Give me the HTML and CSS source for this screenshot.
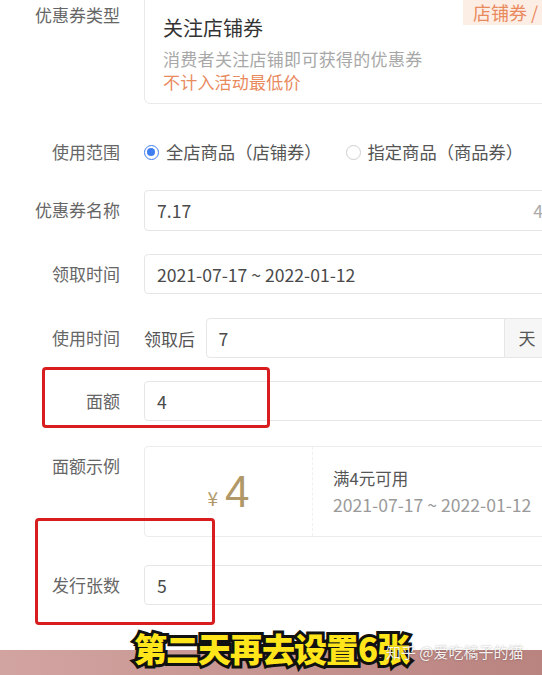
FILE: index.html
```html
<!DOCTYPE html>
<html lang="zh-CN">
<head>
<meta charset="utf-8">
<title>优惠券设置</title>
<link rel="stylesheet" href="styles.css">
</head>
<body>
<div class="page">
  <div class="form">
    <div class="row row-type">
      <div class="label label-type">优惠券类型</div>
      <div class="card">
        <div class="badge">店铺券 /</div>
        <div class="card-title">关注店铺券</div>
        <div class="card-desc">消费者关注店铺即可获得的优惠券</div>
        <div class="card-note">不计入活动最低价</div>
      </div>
    </div>

    <div class="row row-radio">
      <div class="label">使用范围</div>
      <div class="radios">
        <label class="radio"><span class="dot on"></span>全店商品（店铺券）</label>
        <label class="radio"><span class="dot"></span>指定商品（商品券）</label>
      </div>
    </div>

    <div class="row row-name">
      <div class="label">优惠券名称</div>
      <div class="input"><span>7.17</span><span class="count">4</span></div>
    </div>

    <div class="row row-get">
      <div class="label">领取时间</div>
      <div class="input"><span>2021-07-17 ~ 2022-01-12</span></div>
    </div>

    <div class="row row-use">
      <div class="label">使用时间</div>
      <div class="use">
        <span class="prefix">领取后</span>
        <div class="input input-days"><span>7</span></div>
        <div class="addon">天</div>
      </div>
    </div>

    <div class="row row-amount">
      <div class="label">面额</div>
      <div class="input"><span>4</span></div>
    </div>

    <div class="row row-preview">
      <div class="label">面额示例</div>
      <div class="preview">
        <div class="pv-left"><span class="yen">¥</span><span class="big">4</span></div>
        <div class="pv-right">
          <div class="pv-cond">满4元可用</div>
          <div class="pv-date">2021-07-17 ~ 2022-01-12</div>
        </div>
      </div>
    </div>

    <div class="row row-count">
      <div class="label">发行张数</div>
      <div class="input"><span>5</span></div>
    </div>
  </div>

  <div class="strip"></div>

  <div class="mark mark-1"></div>
  <div class="mark mark-2"></div>
  <div class="caption">第二天再去设置6张</div>
  <div class="watermark">知乎 @爱吃橘子的猫</div>
</div>
</body>
</html>
```

FILE: styles.css
```css
* { box-sizing: border-box; }
html, body { margin: 0; padding: 0; }
body {
  width: 542px;
  height: 675px;
  overflow: hidden;
  background: #ffffff;
  font-family: "Noto Sans CJK SC", "Noto Sans", sans-serif;
  color: #444;
}
.page {
  position: relative;
  width: 542px;
  height: 675px;
  overflow: hidden;
  display: flex;
  flex-direction: column;
}
.form {
  margin-top: -8px;
  display: flex;
  flex-direction: column;
}
.row {
  display: grid;
  grid-template-columns: 120px 440px;
  column-gap: 24px;
  align-items: start;
}
.label {
  text-align: right;
  font-size: 17px;
  line-height: 24px;
  color: #666;
  padding-top: 8px;
  white-space: nowrap;
}
.label-type { padding-top: 11px; }

/* coupon type card */
.card {
  position: relative;
  border: 1px solid #e9e9e9;
  border-radius: 6px;
  padding: 21px 18px 10px 18px;
  height: 112px;
}
.badge {
  position: absolute;
  left: 318px;
  top: 7px;
  height: 25px;
  padding: 0 10px;
  background: #fdeee5;
  color: #e98a5e;
  font-size: 18px;
  line-height: 25px;
  white-space: nowrap;
}
.card-title {
  font-size: 20px;
  line-height: 28px;
  color: #333;
}
.card-desc {
  margin-top: 6px;
  font-size: 17px;
  line-height: 22px;
  letter-spacing: 0.3px;
  color: #a8a8a8;
  white-space: nowrap;
}
.card-note {
  margin-top: 1px;
  font-size: 17px;
  line-height: 22px;
  letter-spacing: 0.2px;
  color: #e98a5e;
}

/* radio */
.row-radio { margin-top: 28px; align-items: center; height: 40px; }
.row-radio .label { padding-top: 0; }
.radios { display: flex; align-items: center; gap: 24px; }
.radio {
  display: flex;
  align-items: center;
  gap: 7px;
  font-size: 17.3px;
  line-height: 24px;
  color: #555;
  white-space: nowrap;
}
.dot {
  width: 15px;
  height: 15px;
  border-radius: 50%;
  border: 1px solid #cfcfcf;
  background: #fff;
  position: relative;
  flex: none;
}
.dot.on {
  border: 1.5px solid #3f7ef0;
}
.dot.on::after {
  content: "";
  position: absolute;
  left: 2px; top: 2px;
  width: 8px; height: 8px;
  border-radius: 50%;
  background: #3f7ef0;
}

/* inputs */
.input {
  height: 40px;
  border: 1px solid #e6e6e6;
  border-radius: 4px;
  padding: 0 12px;
  display: flex;
  align-items: center;
  justify-content: space-between;
  font-size: 17.6px;
  color: #4a4a4a;
  background: #fff;
  white-space: nowrap;
}
.count { color: #aaa; margin-right: 28px; }
.row-name { margin-top: 18px; }
.row-name .input { height: 41px; }
.row-get { margin-top: 23px; }
.row-use { margin-top: 24px; }
.row-amount { margin-top: 23px; }
.row-preview { margin-top: 25px; }
.row-count { margin-top: 28px; }

.use { display: flex; align-items: center; }
.prefix {
  font-size: 17px;
  color: #555;
  width: 63px;
  white-space: nowrap;
}
.input-days {
  width: 306px;
  border-radius: 4px 0 0 4px;
}
.addon {
  width: 80px;
  height: 40px;
  border: 1px solid #e6e6e6;
  border-left: none;
  background: #f6f6f6;
  font-size: 17px;
  color: #555;
  line-height: 38px;
  padding-left: 13px;
}

/* preview */
.preview {
  height: 91px;
  border: 1px solid #ececec;
  border-radius: 4px;
  display: flex;
  align-items: stretch;
}
.pv-left {
  width: 168px;
  display: flex;
  align-items: center;
  justify-content: center;
  color: #b09868;
  border-right: 1px dashed #f0f0f0;
}
.yen { font-size: 19px; margin-right: 7px; margin-top: 12px; }
.big { font-size: 44px; line-height: 44px; font-family: "Liberation Sans", "Noto Sans", sans-serif; font-weight: 400; }
.pv-right {
  padding-left: 20px;
  display: flex;
  flex-direction: column;
  justify-content: center;
  white-space: nowrap;
}
.pv-cond { font-size: 16.5px; line-height: 26px; color: #555; }
.pv-date { font-size: 17.6px; line-height: 27px; color: #9a9a9a; }

/* bottom video strip */
.strip {
  margin-top: auto;
  height: 25px;
  background: linear-gradient(90deg, #d2a4a1 0%, #c79592 45%, #b9837f 100%);
}

/* annotation overlays */
.mark {
  position: absolute;
  border: 3px solid #d71d1d;
  border-radius: 4px;
}
.mark-1 { left: 42px; top: 367px; width: 228px; height: 61px; }
.mark-2 { left: 35px; top: 518px; width: 180px; height: 107px; }

.caption {
  position: absolute;
  left: 134px;
  top: 623px;
  font-size: 33px;
  line-height: 50px;
  font-weight: 900;
  color: #ffe51a;
  letter-spacing: -1px;
  -webkit-text-stroke: 6px #111;
  paint-order: stroke fill;
  white-space: nowrap;
}
.watermark {
  position: absolute;
  left: 386px;
  top: 641px;
  font-size: 15px;
  line-height: 22px;
  color: rgba(255,255,255,0.92);
  text-shadow: 0 0 2px rgba(0,0,0,0.35);
  white-space: nowrap;
}
```
